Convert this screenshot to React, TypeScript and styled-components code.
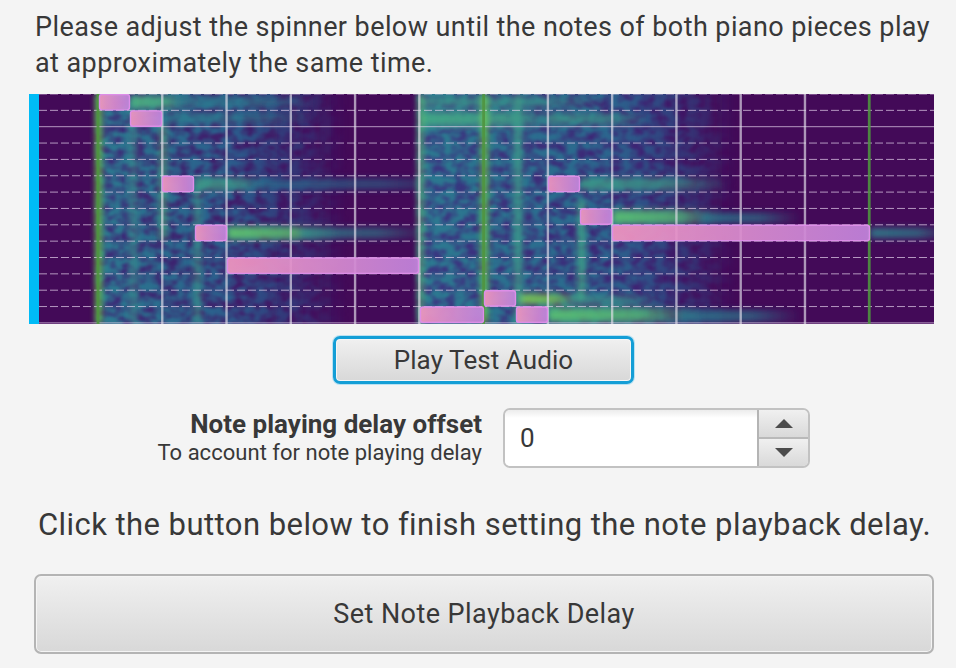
import React from 'react';
import styled, { createGlobalStyle } from 'styled-components';

const GlobalStyle = createGlobalStyle`
  html, body {
    margin: 0;
    padding: 0;
    background: #f4f4f4;
  }
  body {
    font-family: Roboto, "Liberation Sans", sans-serif;
    color: #383838;
    overflow: hidden;
  }
`;

const Page = styled.div`
  width: 956px;
  height: 668px;
  display: flex;
  flex-direction: column;
  box-sizing: border-box;
  padding-top: 9px;
`;

const Prompt = styled.p`
  margin: 0 0 13px 35px;
  width: 915px;
  font-size: 27px;
  line-height: 36px;
  letter-spacing: 0.42px;
  white-space: pre-line;
`;

const PlotFrame = styled.div`
  display: flex;
  width: 905px;
  height: 230px;
  margin-left: 29px;
`;

const Playhead = styled.div`
  width: 10px;
  background: #00bbf6;
`;

const PlotSvg = styled.svg`
  display: block;
  width: 895px;
  height: 230px;
`;

const BaseButton = styled.button`
  display: block;
  box-sizing: border-box;
  font-family: inherit;
  color: #383838;
  background: linear-gradient(#f0f0f0, #d8d8d8);
  padding: 0;
`;

const TestButton = styled(BaseButton)`
  width: 301px;
  height: 48px;
  margin: 12px 0 0 333px;
  font-size: 26px;
  letter-spacing: 0.08px;
  border: 3px solid #149ed6;
  border-radius: 7px;
  box-shadow: 0 0 0 1px #b9e1f2, inset 0 0 0 1px #f6f6f6;
`;

const DelayRow = styled.div`
  display: grid;
  grid-template-columns: 482px 307px;
  column-gap: 21px;
  align-items: center;
  height: 60px;
  margin-top: 24px;
`;

const DelayLabels = styled.div`
  display: flex;
  flex-direction: column;
  align-items: flex-end;
`;

const DelayTitle = styled.div`
  font-size: 26px;
  font-weight: 700;
  line-height: 30px;
  margin-top: -1px;
`;

const DelayHint = styled.div`
  font-size: 22px;
  line-height: 28px;
  letter-spacing: 0.03px;
`;

const Spinner = styled.div`
  display: flex;
  box-sizing: border-box;
  height: 60px;
  border: 2px solid #c2c2c2;
  border-radius: 7px;
  overflow: hidden;
`;

const SpinnerValue = styled.div`
  flex: 1;
  display: flex;
  align-items: center;
  padding-left: 15px;
  font-size: 26px;
  background: linear-gradient(#ececec, #fff 8px);
`;

const SpinnerButtons = styled.div`
  width: 49px;
  display: flex;
  flex-direction: column;
  border-left: 2px solid #b4b4b4;
`;

const SpinnerStep = styled.div`
  flex: 1;
  display: flex;
  align-items: center;
  justify-content: center;
  background: linear-gradient(#f0f0f0, #d9d9d9);
  & + & {
    border-top: 2px solid #b9b9b9;
  }
`;

const Arrow = styled.div<{ $down?: boolean }>`
  width: 0;
  height: 0;
  border-left: 9px solid transparent;
  border-right: 9px solid transparent;
  ${(p) =>
    p.$down
      ? 'border-top: 9px solid #4c4c4c;'
      : 'border-bottom: 9px solid #4c4c4c;'}
`;

const Instruction = styled.p`
  margin: 39px 0 31px 38px;
  font-size: 31px;
  line-height: 36px;
  letter-spacing: 0.44px;
  white-space: nowrap;
`;

const SetButton = styled(BaseButton)`
  width: 900px;
  height: 80px;
  margin-left: 34px;
  font-size: 27px;
  letter-spacing: 0.43px;
  border: 2px solid #b4b4b4;
  border-radius: 7px;
  box-shadow: inset 0 0 0 1px #f4f4f4;
`;

const TOP = 94;
const ROW = 16.35;
const BEAT = 64.27;
const FIRST_BEAT = 98;

const verticals = Array.from({ length: 13 }, (_, i) => FIRST_BEAT + i * BEAT);
const rows = Array.from({ length: 15 }, (_, i) => TOP + i * ROW);

// x1, x2, row index
const notes: [number, number, number][] = [
  [99, 130, 0],
  [130, 162, 1],
  [162, 194, 5],
  [195, 227, 8],
  [227, 419, 10],
  [420, 484, 13],
  [484, 516, 12],
  [516, 548, 13],
  [548, 580, 5],
  [580, 612, 7],
  [612, 870, 8],
];

// x1, x2, centre y, height, colour, opacity
const bands: [number, number, number, number, string, number][] = [
  [130, 190, 102, 13, '#4cae80', 1],
  [175, 320, 102, 11, '#2f8290', 0.8],
  [162, 320, 118, 10, '#2f8290', 0.75],
  [194, 270, 184, 13, '#3f9e88', 0.9],
  [250, 470, 184, 11, '#2a7290', 0.7],
  [227, 340, 233, 13, '#5cc070', 1],
  [300, 430, 233, 11, '#2f8a90', 0.75],
  [420, 612, 102, 10, '#3f9e88', 0.7],
  [420, 560, 119, 14, '#42a686', 1],
  [548, 650, 119, 11, '#3f9e88', 0.75],
  [580, 730, 184, 12, '#3f9e88', 0.85],
  [612, 720, 217, 14, '#56ba74', 1],
  [700, 800, 218, 11, '#2a8090', 0.8],
  [870, 950, 233, 10, '#2f8a90', 0.85],
  [516, 580, 299, 10, '#7cc850', 1],
  [570, 660, 300, 9, '#3f9e88', 0.75],
  [548, 700, 315, 14, '#56ba74', 1],
  [680, 800, 316, 12, '#2a8090', 0.8],
];

// x, width, y1, y2, colour, opacity
const onsets: [number, number, number, number, string, number][] = [
  [96, 5, 94, 324, '#6fd03f', 1],
  [130, 7, 110, 324, '#3a9088', 0.6],
  [160, 6, 125, 240, '#5cc070', 0.6],
  [194, 7, 190, 324, '#3f9e88', 0.65],
  [418, 5, 94, 324, '#5cc070', 0.8],
  [482, 5, 94, 324, '#72d23e', 1],
  [514, 8, 94, 324, '#3f9e88', 0.8],
  [578, 7, 200, 300, '#45ab84', 0.8],
];

const Spectrogram: React.FC = () => (
  <PlotSvg viewBox="39 94 895 230">
    <defs>
      <filter
        id="field"
        x="-5%"
        y="-5%"
        width="110%"
        height="110%"
        colorInterpolationFilters="sRGB"
      >
        <feGaussianBlur in="SourceGraphic" stdDeviation="3" result="soft" />
        <feTurbulence
          type="fractalNoise"
          baseFrequency="0.09 0.12"
          numOctaves={2}
          seed={11}
        />
        <feColorMatrix
          type="matrix"
          values="0 0 0 0 0  0 0 0 0 0  0 0 0 0 0  2.4 0 0 0 -0.6"
        />
        <feGaussianBlur stdDeviation="1.3" result="grain" />
        <feComposite in="soft" in2="grain" operator="in" />
      </filter>
      <filter id="haze" x="-5%" y="-5%" width="110%" height="110%">
        <feGaussianBlur stdDeviation="3" />
      </filter>
      <filter id="glow" x="-10%" y="-50%" width="120%" height="200%">
        <feGaussianBlur stdDeviation="3.2" />
      </filter>
      <linearGradient id="fadeRight">
        <stop offset="0" stopColor="#fff" />
        <stop offset="0.6" stopColor="#fff" stopOpacity="0.8" />
        <stop offset="1" stopColor="#fff" stopOpacity="0" />
      </linearGradient>
      <linearGradient id="fieldLeft" x1="98" x2="345" gradientUnits="userSpaceOnUse">
        <stop offset="0" stopColor="#2c7a90" />
        <stop offset="0.55" stopColor="#2b5c8c" />
        <stop offset="0.8" stopColor="#2b4c86" stopOpacity="0.55" />
        <stop offset="1" stopColor="#2c4c88" stopOpacity="0" />
      </linearGradient>
      <linearGradient id="fieldRight" x1="419" x2="735" gradientUnits="userSpaceOnUse">
        <stop offset="0" stopColor="#2c7a90" />
        <stop offset="0.6" stopColor="#2b668e" />
        <stop offset="0.85" stopColor="#2b5088" stopOpacity="0.55" />
        <stop offset="1" stopColor="#2c4c88" stopOpacity="0" />
      </linearGradient>
      <linearGradient id="hazeLeft" x1="98" x2="345" gradientUnits="userSpaceOnUse">
        <stop offset="0" stopColor="#3a3480" stopOpacity="0.85" />
        <stop offset="0.7" stopColor="#3d2470" stopOpacity="0.6" />
        <stop offset="1" stopColor="#3d2470" stopOpacity="0" />
      </linearGradient>
      <linearGradient id="hazeRight" x1="419" x2="735" gradientUnits="userSpaceOnUse">
        <stop offset="0" stopColor="#3a3e88" stopOpacity="0.9" />
        <stop offset="0.7" stopColor="#3a3080" stopOpacity="0.7" />
        <stop offset="1" stopColor="#3d2470" stopOpacity="0" />
      </linearGradient>
      <linearGradient id="note">
        <stop offset="0" stopColor="#f195c0" />
        <stop offset="1" stopColor="#c384dc" />
      </linearGradient>
      <mask id="fadeMask" maskContentUnits="objectBoundingBox">
        <rect width="1" height="1" fill="url(#fadeRight)" />
      </mask>
    </defs>

    <rect x="39" y="94" width="895" height="230" fill="#430a58" />
    <g filter="url(#haze)">
      <rect x="98" y="88" width="247" height="242" fill="url(#hazeLeft)" />
      <rect x="419" y="88" width="316" height="242" fill="url(#hazeRight)" />
    </g>
    <g filter="url(#field)">
      <rect x="98" y="88" width="247" height="242" fill="url(#fieldLeft)" />
      <rect x="419" y="88" width="316" height="242" fill="url(#fieldRight)" />
    </g>
    <g filter="url(#glow)">
      {bands.map(([x1, x2, y, h, color, opacity], i) => (
        <rect
          key={i}
          x={x1}
          y={y - h / 2}
          width={x2 - x1}
          height={h}
          fill={color}
          opacity={opacity}
          mask="url(#fadeMask)"
        />
      ))}
      {onsets.map(([x, w, y1, y2, color, opacity], i) => (
        <rect key={i} x={x} y={y1} width={w} height={y2 - y1} fill={color} opacity={opacity} />
      ))}
    </g>

    {rows.map((y, i) => (
      <line
        key={i}
        x1="39"
        x2="934"
        y1={y}
        y2={y}
        stroke="#e6d3ec"
        strokeOpacity={0.7}
        strokeWidth="1"
        strokeDasharray={i === 2 || i === 14 ? undefined : '8 3'}
      />
    ))}
    {verticals.map((x, i) => {
      const green = i % 6 === 0;
      return (
        <line
          key={i}
          x1={x}
          x2={x}
          y1="94"
          y2="324"
          stroke={green ? '#4f9440' : '#e4e0ec'}
          strokeOpacity={green ? 0.9 : 0.66}
          strokeWidth={green ? 2.8 : 2.4}
        />
      );
    })}

    {notes.map(([x1, x2, row], i) => (
      <rect
        key={i}
        x={x1 + 0.5}
        y={TOP + row * ROW + 0.5}
        width={x2 - x1 - 1}
        height={ROW - 1}
        rx="2.5"
        fill="url(#note)"
        fillOpacity="0.93"
        stroke="#dd8ee8"
        strokeWidth="1.4"
      />
    ))}
  </PlotSvg>
);

const App: React.FC = () => (
  <>
    <GlobalStyle />
    <Page>
      <Prompt>
        {'Please adjust the spinner below until the notes of both piano pieces play\nat approximately the same time.'}
      </Prompt>
      <PlotFrame>
        <Playhead />
        <Spectrogram />
      </PlotFrame>
      <TestButton>Play Test Audio</TestButton>
      <DelayRow>
        <DelayLabels>
          <DelayTitle>Note playing delay offset</DelayTitle>
          <DelayHint>To account for note playing delay</DelayHint>
        </DelayLabels>
        <Spinner>
          <SpinnerValue>0</SpinnerValue>
          <SpinnerButtons>
            <SpinnerStep>
              <Arrow />
            </SpinnerStep>
            <SpinnerStep>
              <Arrow $down />
            </SpinnerStep>
          </SpinnerButtons>
        </Spinner>
      </DelayRow>
      <Instruction>Click the button below to finish setting the note playback delay.</Instruction>
      <SetButton>Set Note Playback Delay</SetButton>
    </Page>
  </>
);

export default App;
